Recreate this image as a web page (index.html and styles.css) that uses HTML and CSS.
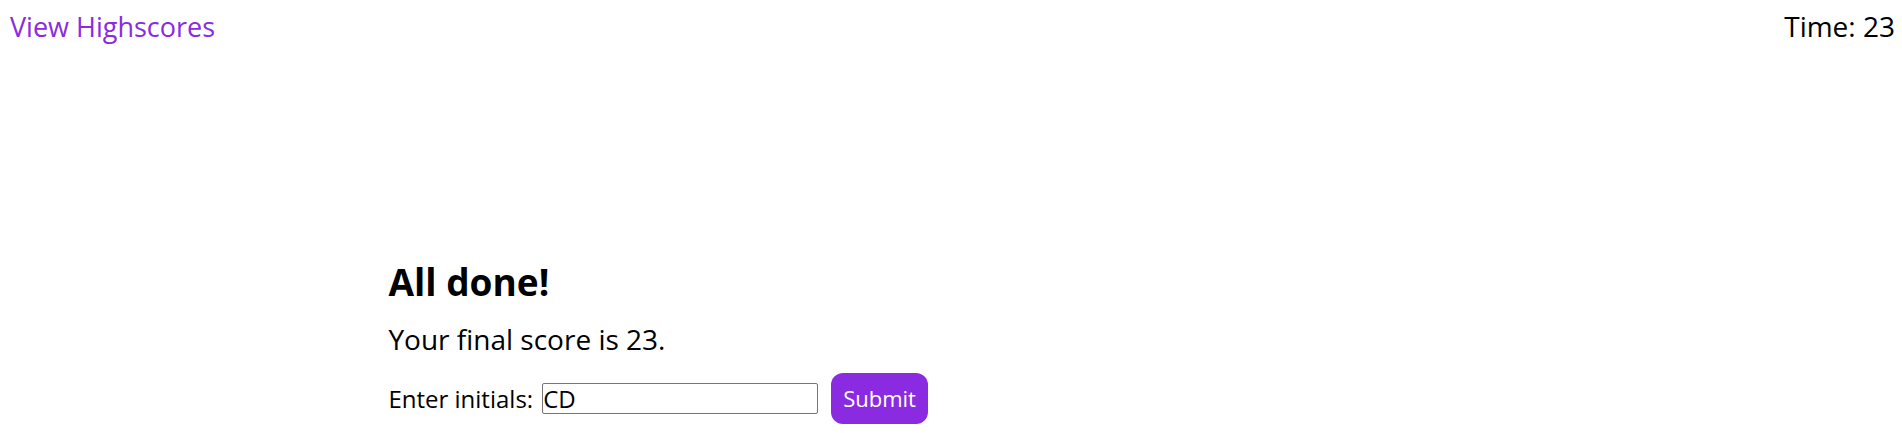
FILE: index.html
```
<!DOCTYPE html>
<html lang="en">
<head>
<meta charset="utf-8">
<title>Code Quiz</title>
<link rel="stylesheet" href="styles.css">
</head>
<body>
<header class="topbar">
<a class="scores-link" href="#highscores">View Highscores</a>
<p class="timer">Time: 23</p>
</header>
<main class="result">
<h1 class="result-title">All done!</h1>
<p class="result-score">Your final score is 23.</p>
<form class="initials-form">
<label class="initials-label" for="initials">Enter initials:</label>
<input class="initials-input" id="initials" type="text" value="CD">
<button class="submit-button" type="button">Submit</button>
</form>
</main>
</body>
</html>
```

FILE: styles.css
```
* {
  box-sizing: border-box;
  margin: 0;
  padding: 0;
}

body {
  background: #fff;
  color: #000;
  font-family: "Trebuchet MS", "Open Sans", "Noto Sans", sans-serif;
  font-size: 28px;
  line-height: 36px;
}

.topbar {
  display: flex;
  align-items: baseline;
  justify-content: space-between;
  padding: 8px 7px 0 10px;
}

.scores-link {
  color: blueviolet;
  font-size: 27px;
  text-decoration: none;
}

.result {
  width: 60%;
  margin: 213px auto 0;
  padding: 0 8px;
}

.result-title {
  font-size: 37px;
  line-height: 48px;
}

.result-score {
  margin-top: 15px;
}

.initials-form {
  display: flex;
  align-items: center;
  margin-top: 16px;
  font-size: 24px;
}

.initials-input {
  width: 276px;
  height: 31px;
  margin: 0 13px 0 9px;
  padding: 1px 0;
  border: 1px solid #767676;
  border-radius: 2px;
  font: inherit;
}

.submit-button {
  padding: 8px 12px;
  border: 0;
  border-radius: 12px;
  background: blueviolet;
  color: #fff;
  font: inherit;
  font-size: 22px;
  font-weight: 500;
  line-height: 35px;
}
```
